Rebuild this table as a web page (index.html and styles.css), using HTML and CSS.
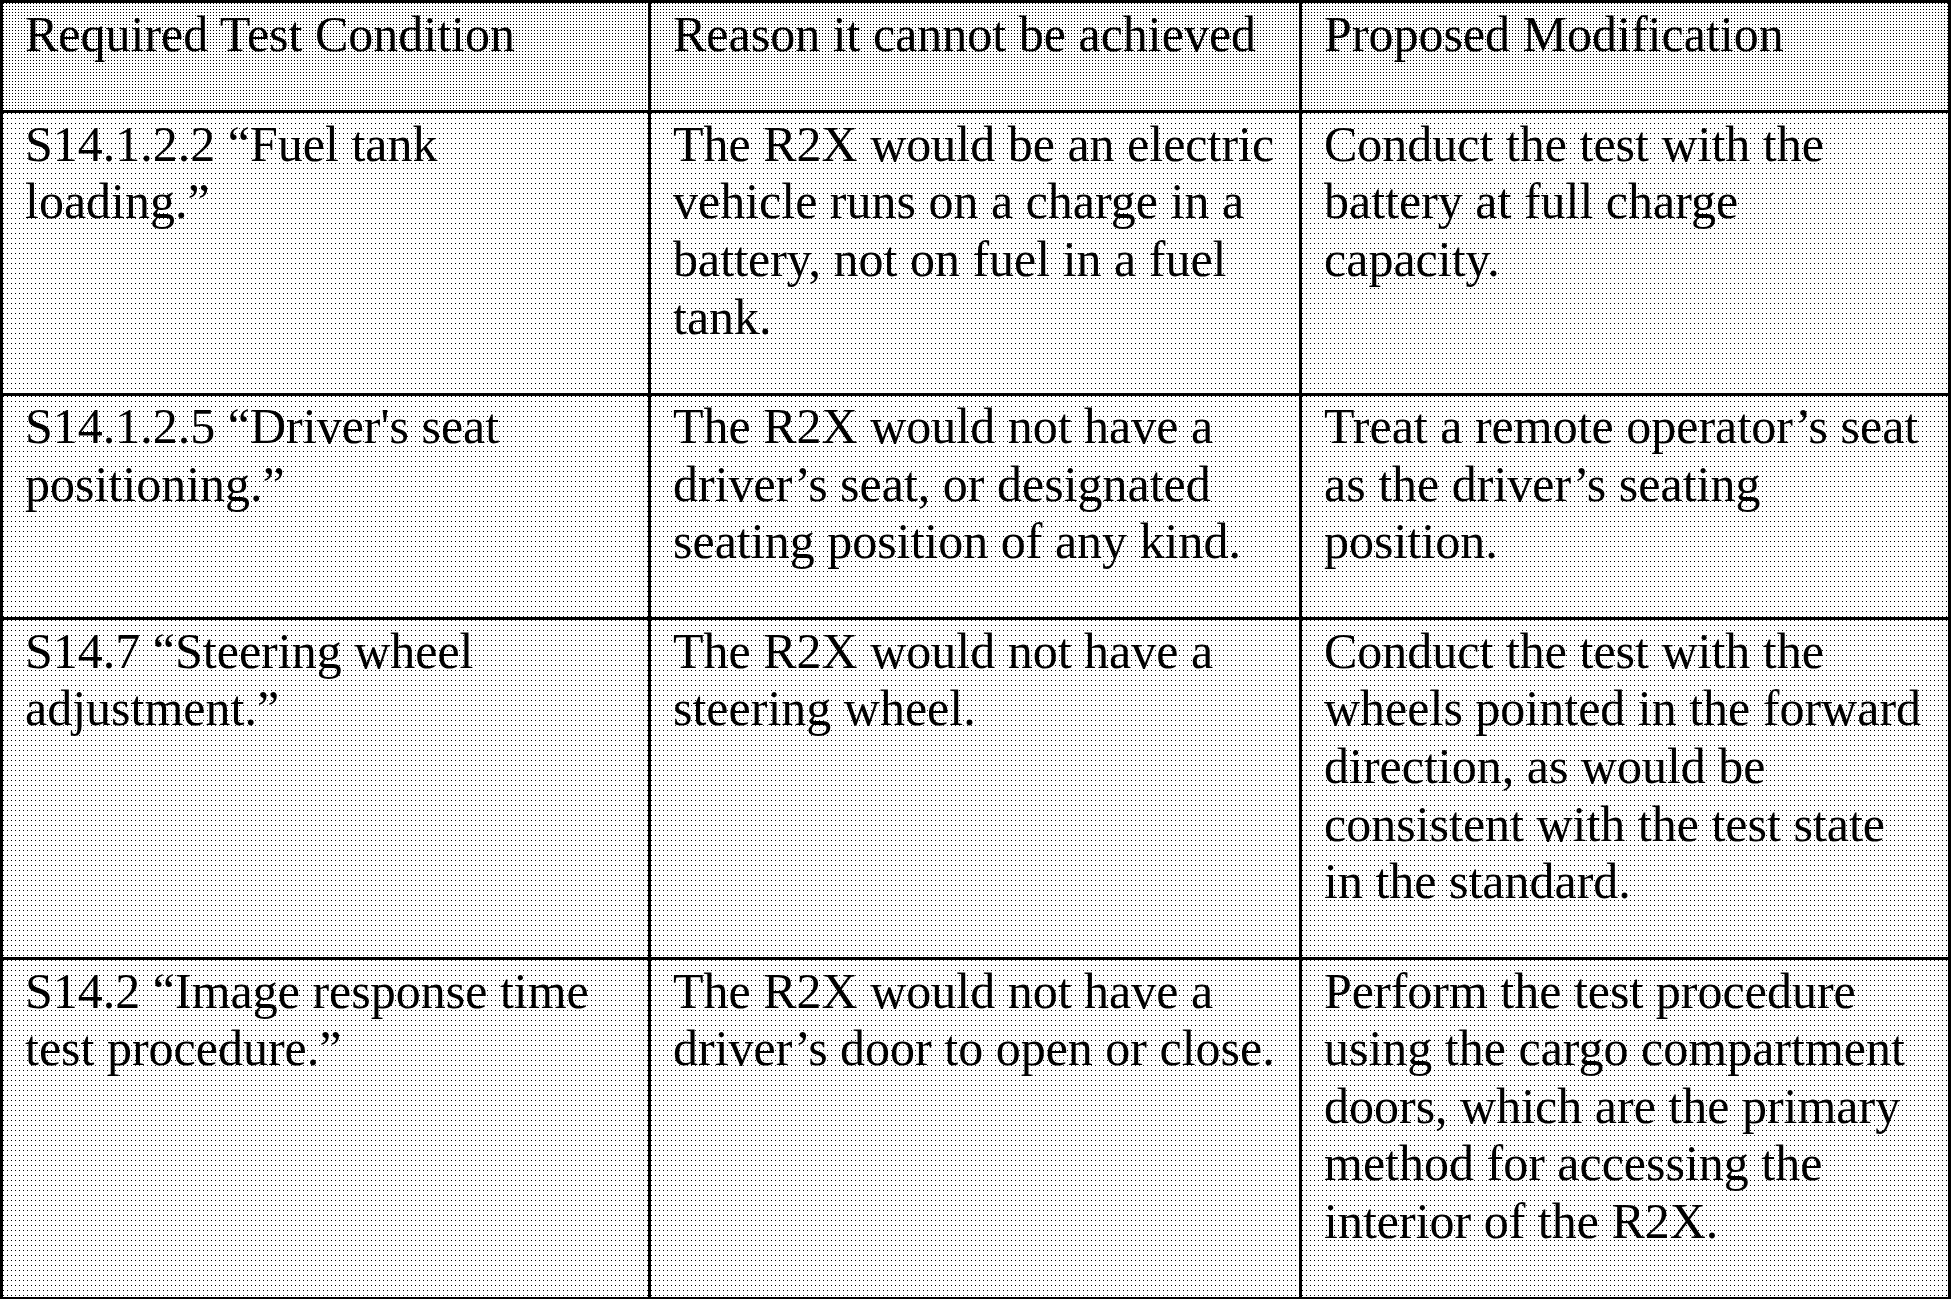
FILE: index.html
```html
<!DOCTYPE html>
<html lang="en">
<head>
<meta charset="utf-8">
<title>Test Condition Modifications</title>
<link rel="stylesheet" href="styles.css">
</head>
<body>
<div class="table" role="table">
  <div class="cell head" role="columnheader">Required Test Condition</div>
  <div class="cell head" role="columnheader">Reason it cannot be achieved</div>
  <div class="cell head" role="columnheader">Proposed Modification</div>

  <div class="cell" role="cell">S14.1.2.2 “Fuel tank<br>loading.”</div>
  <div class="cell" role="cell">The R2X would be an electric<br>vehicle runs on a charge in a<br>battery, not on fuel in a fuel<br>tank.</div>
  <div class="cell" role="cell">Conduct the test with the<br>battery at full charge<br>capacity.</div>

  <div class="cell" role="cell">S14.1.2.5 “Driver's seat<br>positioning.”</div>
  <div class="cell" role="cell">The R2X would not have a<br>driver’s seat, or designated<br>seating position of any kind.</div>
  <div class="cell" role="cell">Treat a remote operator’s seat<br>as the driver’s seating<br>position.</div>

  <div class="cell" role="cell">S14.7 “Steering wheel<br>adjustment.”</div>
  <div class="cell" role="cell">The R2X would not have a<br>steering wheel.</div>
  <div class="cell" role="cell">Conduct the test with the<br>wheels pointed in the forward<br>direction, as would be<br>consistent with the test state<br>in the standard.</div>

  <div class="cell" role="cell">S14.2 “Image response time<br>test procedure.”</div>
  <div class="cell" role="cell">The R2X would not have a<br>driver’s door to open or close.</div>
  <div class="cell" role="cell">Perform the test procedure<br>using the cargo compartment<br>doors, which are the primary<br>method for accessing the<br>interior of the R2X.</div>
</div>
</body>
</html>
```

FILE: styles.css
```css
html, body {
  margin: 0;
  padding: 0;
  background: #fff;
}

.table {
  display: grid;
  grid-template-columns: 645px 648px 646px;
  gap: 3px;
  padding: 3px;
  width: 1951px;
  box-sizing: border-box;
  background: #000;
  font-family: "Liberation Serif", "Times New Roman", serif;
  font-size: 50px;
  line-height: 57.6px;
  color: #000;
}

.cell {
  padding: 2.5px 6px 46.4px 22px;
  white-space: nowrap;
  overflow: hidden;
  background-color: #fff;
  background-image: conic-gradient(from 270deg at 1.3px 1.3px, #000 25%, transparent 0);
  background-size: 4px 5px;
}

.head {
  padding-bottom: 47.2px;
  background-image: conic-gradient(from 270deg at 1.4px 1.4px, #000 25%, transparent 0);
  background-size: 3px 3px;
}
```
